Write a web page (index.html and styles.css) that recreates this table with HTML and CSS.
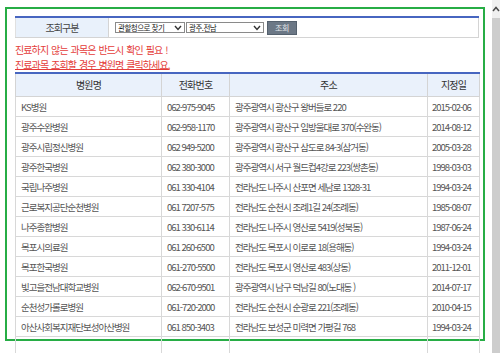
FILE: index.html
```html
<!DOCTYPE html>
<html lang="ko">
<head>
<meta charset="utf-8">
<title>병원 조회</title>
<link rel="stylesheet" href="styles.css">
</head>
<body>
<div class="page">
  <main class="frame">
    <table class="search">
      <tr>
        <th>조회구분</th>
        <td>
          <div class="controls">
            <span class="sel sel-1"><select><option>관할청으로 찾기</option></select><svg class="chev" viewBox="0 0 8 6" width="8" height="6"><polyline points="1,1 4,4.5 7,1" fill="none" stroke="#333" stroke-width="1.4"/></svg></span>
            <span class="sel sel-2"><select><option>광주.전남</option></select><svg class="chev" viewBox="0 0 8 6" width="8" height="6"><polyline points="1,1 4,4.5 7,1" fill="none" stroke="#333" stroke-width="1.4"/></svg></span>
            <button class="btn" type="button">조회</button>
          </div>
        </td>
      </tr>
    </table>
    <p class="notice"><span class="notice-line">진료하지 않는 과목은 반드시 확인 필요 !</span><a class="notice-line notice-link">진료과목 조회할 경우 병원명 클릭하세요.</a></p>
    <table class="list">
      <colgroup><col class="c1"><col class="c2"><col class="c3"><col class="c4"></colgroup>
      <thead>
        <tr><th>병원명</th><th>전화번호</th><th>주소</th><th>지정일</th></tr>
      </thead>
      <tbody>
        <tr><td>KS병원</td><td>062-975-9045</td><td>광주광역시 광산구 왕버들로 220</td><td>2015-02-06</td></tr>
        <tr><td>광주수완병원</td><td>062-958-1170</td><td>광주광역시 광산구 임방울대로 370(수완동)</td><td>2014-08-12</td></tr>
        <tr><td>광주시립정신병원</td><td>062 949-5200</td><td>광주광역시 광산구 삼도로 84-3(삼거동)</td><td>2005-03-28</td></tr>
        <tr><td>광주한국병원</td><td>062 380-3000</td><td>광주광역시 서구 월드컵4강로 223(쌍촌동)</td><td>1998-03-03</td></tr>
        <tr><td>국립나주병원</td><td>061 330-4104</td><td>전라남도 나주시 산포면 세남로 1328-31</td><td>1994-03-24</td></tr>
        <tr><td>근로복지공단순천병원</td><td>061 7207-575</td><td>전라남도 순천시 조례1길 24(조례동)</td><td>1985-08-07</td></tr>
        <tr><td>나주종합병원</td><td>061 330-6114</td><td>전라남도 나주시 영산로 5419(성북동)</td><td>1987-06-24</td></tr>
        <tr><td>목포시의료원</td><td>061 260-6500</td><td>전라남도 목포시 이로로 18(용해동)</td><td>1994-03-24</td></tr>
        <tr><td>목포한국병원</td><td>061-270-5500</td><td>전라남도 목포시 영산로 483(상동)</td><td>2011-12-01</td></tr>
        <tr><td>빛고을전남대학교병원</td><td>062-670-9501</td><td>광주광역시 남구 덕남길 80(노대동 )</td><td>2014-07-17</td></tr>
        <tr><td>순천성가롤로병원</td><td>061-720-2000</td><td>전라남도 순천시 순광로 221(조례동)</td><td>2010-04-15</td></tr>
        <tr><td>아산사회복지재단보성아산병원</td><td>061 850-3403</td><td>전라남도 보성군 미력면 가평길 768</td><td>1994-03-24</td></tr>
        <tr class="empty"><td></td><td></td><td></td><td></td></tr>
      </tbody>
    </table>
  </main>
  <div class="scrollbar">
    <div class="sb-btn"><svg viewBox="0 0 8 6" width="8" height="6"><polyline points="1,5 4,1.5 7,5" fill="none" stroke="#4a4a4a" stroke-width="1.5"/></svg></div>
    <div class="sb-thumb"></div>
  </div>
</div>
</body>
</html>
```

FILE: styles.css
```css
html, body {
  margin: 0;
  padding: 0;
  height: 353px;
  overflow: hidden;
  background: #fff;
}

body {
  font-family: "Noto Sans CJK KR", "Noto Sans", sans-serif;
  color: #555;
}

.page {
  display: flex;
  height: 353px;
}

.frame {
  flex: none;
  box-sizing: border-box;
  width: 480px;
  height: 334px;
  margin: 7px 0 0 5px;
  padding: 7px 4px 0 8px;
  border: 2px solid #27ad45;
}

/* search bar */
.search {
  width: 464px;
  border-collapse: collapse;
  border-top: 2px solid #4766c0;
  border-bottom: 1px solid #d4d4d4;
  border-left: 1px solid #e0e0e0;
  border-right: 1px solid #d4d4d4;
}

.search th {
  width: 92px;
  height: 19px;
  padding: 0;
  background: #e9f1fb;
  border-right: 1px solid #d4d4d4;
  font-weight: normal;
  font-size: 10px;
  letter-spacing: -1px;
  color: #444;
  text-align: center;
  vertical-align: middle;
  line-height: 19px;
}

.search td {
  padding: 0 0 0 6px;
  vertical-align: middle;
}

.controls {
  display: flex;
  align-items: center;
}

.sel {
  position: relative;
  display: block;
  margin-right: 1px;
}

.sel select {
  display: block;
  appearance: none;
  -webkit-appearance: none;
  box-sizing: border-box;
  height: 11px;
  margin: 0;
  padding: 0 0 0 2px;
  border: 1px solid #8a8a8a;
  border-radius: 0;
  background: #fff;
  font-family: inherit;
  font-size: 7.5px;
  line-height: 9px;
  letter-spacing: -0.5px;
  color: #222;
}

.sel-1 select { width: 70px; }
.sel-2 select { width: 78px; }

.chev {
  position: absolute;
  right: 3px;
  top: 3px;
}

.btn {
  box-sizing: border-box;
  width: 30px;
  height: 14px;
  margin-left: 2px;
  padding: 0;
  border: 1px solid #55616e;
  background: #6c7886;
  color: #e6e9ec;
  font-family: inherit;
  font-size: 8px;
  letter-spacing: -0.3px;
  line-height: 12px;
}

/* notice */
.notice {
  display: flex;
  flex-direction: column;
  align-items: flex-start;
  margin: 5px 0 0;
  font-size: 10px;
  line-height: 14.5px;
  letter-spacing: -0.9px;
  word-spacing: 1px;
  color: #e43c3a;
}

.notice-line {
  display: block;
  height: 14.5px;
}

.notice-link {
  text-decoration: underline;
  text-underline-offset: 0px;
}

/* list table */
.list {
  width: 464px;
  table-layout: fixed;
  border-collapse: collapse;
  border-top: 2px solid #4766c0;
}

.c1 { width: 146px; }
.c2 { width: 68px; }
.c3 { width: 198px; }
.c4 { width: 52px; }

.list th {
  height: 22px;
  padding: 0;
  background: #eaf1fb;
  border: 1px solid #d4d4d4;
  border-top: none;
  font-weight: normal;
  font-size: 10px;
  line-height: 14px;
  letter-spacing: -0.8px;
  color: #333;
  text-align: center;
  vertical-align: middle;
}

.list td {
  height: 19px;
  padding: 0 0 0 5px;
  border: 1px solid #d8d8d8;
  font-size: 9.5px;
  letter-spacing: -1px;
  line-height: 12px;
  color: #555;
  white-space: nowrap;
  overflow: hidden;
  vertical-align: middle;
}

.list td:nth-child(4) {
  padding-left: 4px;
}

/* right scrollbar strip */
.scrollbar {
  flex: none;
  width: 8px;
  margin-left: auto;
  display: flex;
  flex-direction: column;
  height: 353px;
}

.sb-btn {
  height: 18px;
  background: #f0f0f0;
  display: flex;
  justify-content: center;
  align-items: center;
}

.sb-thumb {
  flex: 1;
  background: #cdcdcd;
}
```
